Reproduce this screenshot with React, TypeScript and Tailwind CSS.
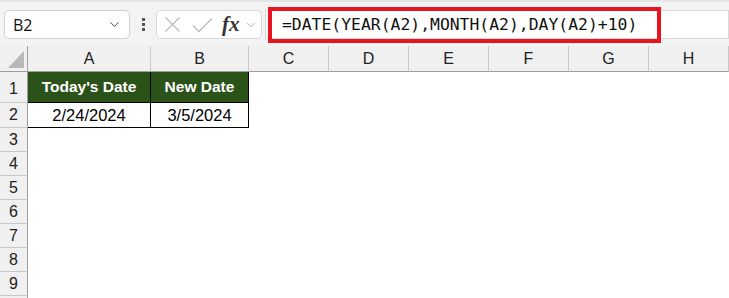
import { ChevronDown } from 'lucide-react';

const cols = ['C', 'D', 'E', 'F', 'G', 'H'];
const rows = [3, 4, 5, 6, 7, 8, 9, 10];

const App = () => {
    return (
        <div className="w-[729px] h-[298px] overflow-hidden bg-white font-['Liberation_Sans',sans-serif] text-[#222]">
            {/* Formula bar */}
            <div className="relative h-[46px] bg-[#f3f3f3] border-t-2 border-[#e4e4e4] flex items-start pt-[8px]">
                <div className="ml-[4px] w-[126px] h-[29px] bg-white border border-[#d1d1d1] rounded-[5px] flex items-center pl-[8px] pr-[7px]">
                    <span className="text-[16px] text-[#111] font-['Open_Sans',sans-serif] flex-1">B2</span>
                    <ChevronDown size={15} strokeWidth={1.6} className="text-[#444]" />
                </div>
                <div className="w-[26px] h-[29px] flex flex-col items-center justify-center gap-[2px]">
                    <div className="w-[3px] h-[3px] bg-[#555]" />
                    <div className="w-[3px] h-[3px] bg-[#555]" />
                    <div className="w-[3px] h-[3px] bg-[#555]" />
                </div>
                <div className="w-[106px] h-[29px] bg-white border border-[#d9d9d9] rounded-[5px] flex items-center pl-[7px]">
                    <svg width="17" height="17" viewBox="0 0 17 17" fill="none" stroke="#bdbdbd" strokeWidth="1.3">
                        <path d="M1.5 1.5 L15.5 15.5 M15.5 1.5 L1.5 15.5" />
                    </svg>
                    <svg width="21" height="16" viewBox="0 0 21 16" fill="none" stroke="#bdbdbd" strokeWidth="1.3" className="ml-[11px]">
                        <path d="M1 8.5 L7 14.5 L20 1.5" />
                    </svg>
                    <span className="ml-[9px] font-['Liberation_Serif',serif] italic font-bold text-[21px] text-[#333] leading-none">fx</span>
                    <ChevronDown size={14} strokeWidth={1.4} className="text-[#aaa] ml-[4px]" />
                </div>
                <div className="ml-[3px] flex-1 h-[29px] bg-white border border-[#d9d9d9]" />
                <div className="absolute left-[268px] top-[5px] w-[393px] h-[36px] border-[4px] border-[#e8141f] flex items-center pl-[10px]">
                    <span className="font-['DejaVu_Sans_Mono',monospace] text-[16.4px] text-[#111] leading-none">=DATE(YEAR(A2),MONTH(A2),DAY(A2)+10)</span>
                </div>
            </div>

            {/* Sheet grid */}
            <div className="grid grid-cols-[28px_123px_98px_80px_80px_80px_80px_80px_80px] grid-rows-[26px_31px_25px_24px_24px_24px_24px_24px_24px_24px_24px] text-[16px]">
                {/* header row */}
                <div className="relative bg-[#f0f0f0] border-r border-b border-[#9e9e9e]">
                    <div className="absolute right-[3px] bottom-[3px] w-0 h-0 border-l-[16px] border-l-transparent border-b-[17px] border-b-[#b8b8b8]" />
                </div>
                <div className="bg-[#f0f0f0] border-r border-b border-r-[#c8c8c8] border-b-[#9e9e9e] flex items-center justify-center">A</div>
                <div className="bg-[#f0f0f0] border-r border-b border-r-[#c8c8c8] border-b-[#9e9e9e] flex items-center justify-center">B</div>
                {cols.map((c) => (
                    <div key={c} className="bg-[#f0f0f0] border-r border-b border-r-[#c8c8c8] border-b-[#9e9e9e] flex items-center justify-center">{c}</div>
                ))}

                {/* row 1 */}
                <div className="bg-[#f0f0f0] border-r border-b border-r-[#9e9e9e] border-b-[#c8c8c8] flex items-end justify-center pb-[1px]">1</div>
                <div className="bg-[#2b5219] border-r border-b border-black flex items-center justify-center text-white font-bold text-[15.5px]">Today's Date</div>
                <div className="bg-[#2b5219] border-r border-b border-black flex items-center justify-center text-white font-bold text-[15.5px]">New Date</div>
                {cols.map((c) => (
                    <div key={c} />
                ))}

                {/* row 2 */}
                <div className="bg-[#f0f0f0] border-r border-b border-r-[#9e9e9e] border-b-[#c8c8c8] flex items-center justify-center">2</div>
                <div className="border-r border-b border-black flex items-center justify-center text-[16.5px] text-black">2/24/2024</div>
                <div className="border-r border-b border-black flex items-center justify-center text-[16.5px] text-black">3/5/2024</div>
                {cols.map((c) => (
                    <div key={c} />
                ))}

                {rows.map((r) => (
                    <div key={r} className="contents">
                        <div className="bg-[#f0f0f0] border-r border-b border-r-[#9e9e9e] border-b-[#c8c8c8] flex items-center justify-center">{r}</div>
                        <div />
                        <div />
                        {cols.map((c) => (
                            <div key={c} />
                        ))}
                    </div>
                ))}
            </div>
        </div>
    );
};

export default App;
